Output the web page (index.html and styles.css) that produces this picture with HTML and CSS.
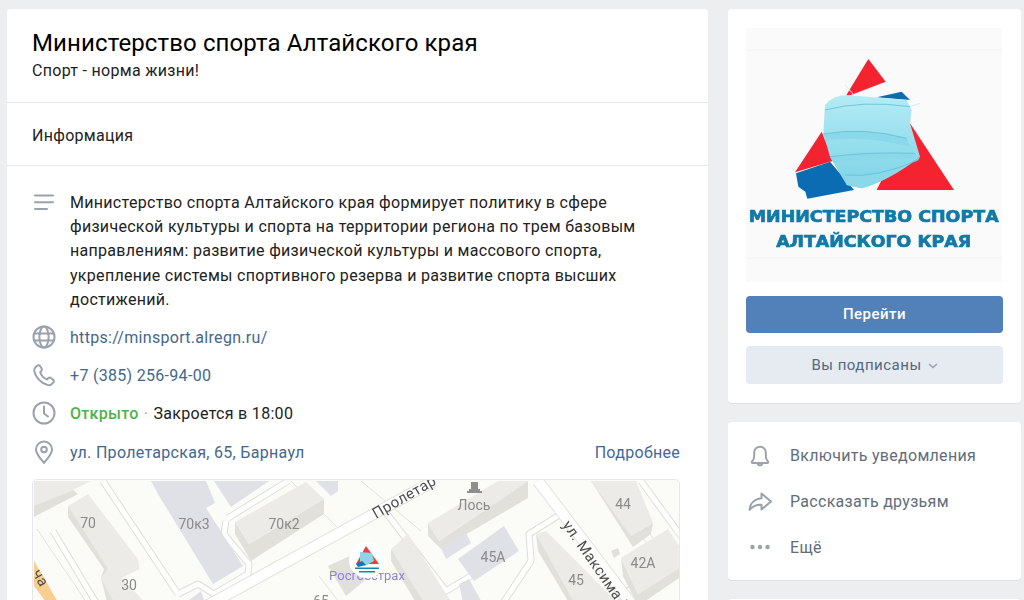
FILE: index.html
```html
<!DOCTYPE html>
<html lang="ru">

<head>
    <meta charset="UTF-8">
    <title>Министерство спорта Алтайского края</title>
    <link rel="stylesheet" href="styles.css">
</head>

<body>
    <div class="page">
        <main class="card main">
            <header class="head">
                <h1>Министерство спорта Алтайского края</h1>
                <p>Спорт - норма жизни!</p>
            </header>
            <div class="tab">Информация</div>
            <div class="info">
                <div class="row row-top">
                    <svg class="ico" viewBox="0 0 24 24"><path d="M3 3.500h18M3 10.200h18M3 16.900h12" /></svg>
                    <p class="desc">Министерство спорта Алтайского края формирует политику в сфере физической культуры и спорта на территории региона по трем базовым направлениям: развитие физической культуры и массового спорта, укрепление системы спортивного резерва и развитие спорта высших достижений.</p>
                </div>
                <div class="row">
                    <svg class="ico" viewBox="0 0 24 24"><circle cx="12" cy="12" r="10.500" /><ellipse cx="12" cy="12" rx="4.600" ry="10.500" /><path d="M2 8.500h20M2 15.500h20" /></svg>
                    <a class="link" href="#">https://minsport.alregn.ru/</a>
                </div>
                <div class="row">
                    <svg class="ico" viewBox="0 0 24 24"><path d="M3.200 4.600 5.400 2.600c.8-.7 1.900-.6 2.500.3l1.700 2.600c.5.8.4 1.700-.2 2.400L8.200 9.200c.9 2.800 3.700 5.900 6.800 7.200l1.500-1.300c.7-.6 1.700-.6 2.400-.1l2.300 1.800c.8.700.9 1.900.1 2.600l-1.900 2c-1 .8-2.600 1-4 .5C8.700 19.700 3.800 14.200 2.300 8.200c-.3-1.400.1-2.700.9-3.600z" /></svg>
                    <span class="link">+7 (385) 256-94-00</span>
                </div>
                <div class="row">
                    <svg class="ico" viewBox="0 0 24 24"><circle cx="12" cy="12" r="10.500" /><path d="M12 5.500V12.500L16 15.500" /></svg>
                    <span><b class="open">Открыто</b> <i class="dot">·</i> Закроется в 18:00</span>
                </div>
                <div class="row row-addr">
                    <svg class="ico" viewBox="0 0 24 24"><path d="M12 23C8 18 4 14 4 9.500a8 8 0 0 1 16 0C20 14 16 18 12 23z" /><circle cx="12" cy="9.500" r="2.800" /></svg>
                    <span class="link addr">ул. Пролетарская, 65, Барнаул</span>
                    <a class="more" href="#">Подробнее</a>
                </div>
            </div>
            <div class="map">
                <svg class="map-svg" viewBox="32 479 648 140">
                    <rect x="32" y="479" width="648" height="140" fill="#fbfbf7" />
                    <!-- roads -->
                    <path class="thin" d="M36 528 88 605M360 480 420 530M318 575 345 610M290 480 345 535M610 480 680 575M600 480 670 575" />
                    <g class="road-edge">
                        <path d="M102 480 177 593M52 530 97 605M227 517 287 480M225 520 223 533 248 563 247 573 213 593 197 583 177 593M560 513 528 533 530 560 500 605M640 480 680 535M600 605 680 560M380 505 445 590 470 575" />
                    </g>
                    <g class="road">
                        <path d="M102 480 177 593M52 530 97 605M227 517 287 480M225 520 223 533 248 563 247 573 213 593 197 583 177 593M560 513 528 533 530 560 500 605M640 480 680 535M600 605 680 560M380 505 445 590 470 575" />
                    </g>
                    <path class="road-edge-big" d="M187 615 433 480M537 480 632 605" />
                    <path class="road-big" d="M187 615 433 480M537 480 632 605" />
                    <polygon fill="#f9cf8f" points="33,560 45,580 59,605 48,605 33,585" />
                    <!-- buildings -->
                    <polygon class="wall" points="33,503 70,487 77,493 33,516" />
                    <polygon class="roof" points="33,480 90,480 70,490 33,505" />
                    <polygon class="wall" points="67,505 67,516 103,568 100,577 107,605 147,605 120,577 138,568 137,558" />
                    <polygon class="roof" points="67,505 87,493 137,558 138,568 120,577 147,605 115,605 100,577 107,568" />
                    <polygon class="gray" points="150,480 205,480 214,502 205,507 242,565 212,583 157,493" />
                    <polygon class="gray" points="213,480 268,480 230,506" />
                    <polygon class="gray" points="315,480 337,480 337,490 330,495" />
                    <polygon class="gray" points="187,600 200,590 205,605 190,605" />
                    <polygon class="wall" points="234,521 248,543 323,498 323,513 250,560 234,533" />
                    <polygon class="roof" points="234,521 305,481 323,498 248,543" />
                    <polygon class="wall" points="327,565 353,553 375,570 345,595" />
                    <polygon class="wall" points="390,548 390,560 417,605 440,605" />
                    <polygon class="roof" points="390,548 407,533 453,605 425,605" />
                    <polygon class="wall" points="427,522 438,540 527,480 527,497 440,548 427,535" />
                    <polygon class="roof" points="427,522 497,480 527,480 438,540" />
                    <polygon class="gray" points="440,547 465,532 470,542 445,558" />
                    <polygon class="gray" points="457,558 503,525 518,550 473,580" />
                    <polygon class="gray" points="458,583 468,578 483,605 463,605" />
                    <polygon class="wall" points="535,533 537,550 570,605 585,605" />
                    <polygon class="roof" points="535,533 545,530 620,605 575,605" />
                    <polygon class="wall" points="590,480 600,480 632,535 632,546" />
                    <polygon class="wall" points="630,535 652,522 650,533 632,546" />
                    <polygon class="roof" points="590,480 635,480 652,522 630,535" />
                    <polygon class="wall" points="610,550 617,547 619,553 613,557" />
                    <polygon class="wall" points="620,557 637,593 678,567 678,577 637,605 622,575" />
                    <polygon class="roof" points="620,557 667,528 678,545 678,567 637,593" />
                    <!-- labels -->
                    <text class="lb" x="87" y="527">70</text>
                    <text class="lb" x="193" y="528">70к3</text>
                    <text class="lb" x="283" y="528">70к2</text>
                    <text class="lb" x="128" y="589">30</text>
                    <text class="lb" x="320" y="605">65</text>
                    <text class="lb" x="473" y="509">Лось</text>
                    <text class="lb" x="492" y="561">45А</text>
                    <text class="lb" x="575" y="584">45</text>
                    <text class="lb" x="622" y="508">44</text>
                    <text class="lb" x="642" y="567">42А</text>
                    <path fill="#8e8e8e" d="M470 481h7v7h-7zM468 488h11v2h-11zM466 490h15v2h-15z" />
                    <text class="street" transform="translate(375 518) rotate(-30)">Пролетар</text>
                    <text class="street" transform="translate(561 524) rotate(55)">ул. Максима Г</text>
                    <text class="street" transform="translate(31 572) rotate(60)">ча</text>
                    <text class="poi" x="366" y="579">Росгосстрах</text>
                    <!-- marker -->
                    <circle cx="366" cy="559" r="18" fill="#fff" />
                    <polygon fill="#e8403f" points="365,545 378,563 355,563" />
                    <polygon fill="#8fd3e6" points="359,551 371,552 373,560 364,565 359,561" />
                    <polygon fill="#1a73b5" points="355,563 361,560 365,564 357,566" />
                    <rect x="354" y="566.500" width="24" height="1.500" fill="#1b82ad" />
                    <rect x="358" y="570" width="16" height="1.500" fill="#1b82ad" />
                </svg>
            </div>
        </main>
        <aside class="side">
            <section class="card owner">
                <svg class="logo" viewBox="48 54 768 762">
                    <defs>
                        <linearGradient id="mask" x1="0" y1="0" x2="0" y2="1">
                            <stop offset="0" stop-color="#b4ebf5" />
                            <stop offset="1" stop-color="#7dd3e6" />
                        </linearGradient>
                    </defs>
                    <rect x="48" y="54" width="768" height="762" fill="#fafafa" />
                    <path d="M48 120H816M48 744H816" stroke="#f1f1f1" stroke-width="2" />
                    <polygon fill="#f5232f" points="415,147 467,215 345,262" />
                    <polygon fill="#f5232f" points="540,340 672,540 440,540" />
                    <polygon fill="#f5232f" points="275,365 195,487 310,452" />
                    <polygon fill="#0b6cb3" points="198,490 300,455 372,540 232,566 226,545 205,530" />
                    <polygon fill="#0b6cb3" points="440,262 515,245 540,270" />
                    <path fill="url(#mask)" d="M285 285Q310 255 350 255L530 270 545 300 540 340 570 440Q480 510 395 535L350 525 300 440 280 370Z" />
                    <path fill="#8ad8e9" d="M280 372Q400 350 530 385L540 410Q400 375 285 392zM300 440Q420 425 555 430L560 445Q430 445 310 458zM345 495Q440 505 565 450L570 440Q480 510 395 535L350 525z" />
                    <path fill="none" stroke="#62c0d6" stroke-width="2.500" d="M285 300Q400 270 540 290M280 372Q400 350 530 385M300 440Q420 425 555 430M345 495Q440 505 565 450" />
                    <path fill="none" stroke="#cfeff5" stroke-width="3" d="M345 225 372 255M540 290 570 280" />
                    <text class="logo-t" x="431" y="636" textLength="750" lengthAdjust="spacingAndGlyphs">МИНИСТЕРСТВО СПОРТА</text>
                    <text class="logo-t" x="431" y="712" textLength="585" lengthAdjust="spacingAndGlyphs">АЛТАЙСКОГО КРАЯ</text>
                </svg>
                <a class="btn btn-main" href="#">Перейти</a>
                <a class="btn btn-sec" href="#">Вы подписаны
                    <svg class="chev" viewBox="0 0 10 6"><path d="M1 1 5 4.500 9 1" /></svg>
                </a>
            </section>
            <section class="card actions">
                <div class="action">
                    <svg class="ico" viewBox="0 0 24 24"><path d="M4 18.500c1.500-1.500 2.200-3 2.200-5.500V9.500a5.800 5.800 0 0 1 11.600 0V13c0 2.500.7 4 2.200 5.500.5.600.1 1.500-.7 1.500H4.700c-.8 0-1.200-.9-.7-1.500zM9.500 20.500a2.600 2.600 0 0 0 5 0" /></svg>
                    <span>Включить уведомления</span>
                </div>
                <div class="action">
                    <svg class="ico" viewBox="0 0 24 24"><path d="M13.500 4.500 23 12.500l-9.500 8v-4.800C8.500 15.500 4.500 17 1.500 21c.5-6.500 5-11 12-11.800z" /></svg>
                    <span>Рассказать друзьям</span>
                </div>
                <div class="action">
                    <svg class="ico dots" viewBox="0 0 24 24"><circle cx="4.500" cy="12" r="2.200" /><circle cx="12" cy="12" r="2.200" /><circle cx="19.500" cy="12" r="2.200" /></svg>
                    <span>Ещё</span>
                </div>
            </section>
            <section class="card stub"></section>
        </aside>
    </div>
</body>

</html>
```

FILE: styles.css
```css
* {
    margin: 0;
    padding: 0;
    box-sizing: border-box;
}

body {
    width: 1024px;
    height: 600px;
    overflow: hidden;
    background: #edeef0;
    font-family: Roboto, "Noto Sans", sans-serif;
    font-size: 16px;
    letter-spacing: .3px;
    color: #222;
}

a {
    text-decoration: none;
}

.page {
    display: flex;
    align-items: flex-start;
    gap: 20px;
    padding: 9px 3px 0 7px;
}

.card {
    background: #fff;
    border-radius: 4px;
    box-shadow: 0 1px 0 0 #dfe0e4;
}

.main {
    width: 701px;
    height: 700px;
    flex: none;
}

.side {
    width: 293px;
    flex: none;
}

.head {
    height: 94px;
    padding: 18px 25px 0;
    border-bottom: 1px solid #e7e8ec;
}

.head h1 {
    font-size: 24px;
    font-weight: 400;
    letter-spacing: .12px;
    line-height: 32px;
    color: #000;
}

.head p {
    line-height: 23px;
    color: #222;
}

.tab {
    height: 63px;
    padding-left: 25px;
    line-height: 65px;
    border-bottom: 1px solid #e7e8ec;
}

.info {
    padding: 25px 28px 0 25px;
}

.row {
    display: flex;
    align-items: center;
    gap: 14px;
    height: 38px;
}

.row-top {
    align-items: flex-start;
    height: auto;
    margin-bottom: 6px;
}

.row-addr {
    margin-top: 1px;
}

.desc {
    line-height: 24.200px;
    width: 590px;
}

.ico {
    width: 24px;
    height: 24px;
    flex: none;
    fill: none;
    stroke: #99a2ad;
    stroke-width: 2;
    stroke-linecap: round;
    stroke-linejoin: round;
}

.row-top .ico {
    margin-top: 1px;
}

.link {
    color: #44678d;
}

.open {
    font-weight: 500;
    color: #4bb34b;
}

.dot {
    margin: 0 1px;
    font-style: normal;
    color: #99a2ad;
}

.addr {
    flex: 1;
}

.more {
    color: #3f6a96;
}

.map {
    height: 140px;
    margin: 8px 28px 0 25px;
    border: 1px solid #e7e8ec;
    border-radius: 5px 5px 0 0;
    overflow: hidden;
}

.map-svg {
    display: block;
    width: 648px;
    height: 140px;
    filter: blur(.35px);
}

.thin {
    fill: none;
    stroke: #e3e3de;
    stroke-width: 1;
}

.road-edge {
    fill: none;
    stroke: #dfdfda;
    stroke-width: 7;
    stroke-linejoin: round;
}

.road {
    fill: none;
    stroke: #fff;
    stroke-width: 5;
    stroke-linejoin: round;
}

.road-edge-big {
    fill: none;
    stroke: #e3e3de;
    stroke-width: 12;
}

.road-big {
    fill: none;
    stroke: #fff;
    stroke-width: 10;
}

.roof {
    fill: #ecebe7;
}

.wall {
    fill: #e2e0da;
}

.gray {
    fill: #e0e0e7;
}

.lb {
    font-size: 14px;
    letter-spacing: 0;
    fill: #8a8a8a;
    text-anchor: middle;
}

.street {
    font-size: 15px;
    fill: #4d4d4d;
    letter-spacing: .4px;
}

.poi {
    font-size: 13px;
    letter-spacing: 0;
    fill: #8d80ea;
    text-anchor: middle;
}

.owner {
    height: 394px;
    padding: 19px 18px 0;
}

.logo {
    display: block;
    width: 256px;
    height: 254px;
    margin-bottom: 14px;
    filter: blur(.4px);
}

.logo-t {
    font-family: "DejaVu Sans", sans-serif;
    font-size: 46px;
    font-weight: 700;
    letter-spacing: 0;
    fill: #1279a8;
    stroke: #1279a8;
    stroke-width: 2;
    text-anchor: middle;
}

.btn {
    display: flex;
    align-items: center;
    justify-content: center;
    gap: 6px;
    border-radius: 4px;
    font-size: 15px;
    letter-spacing: .5px;
}

.btn-main {
    height: 37px;
    margin-bottom: 13px;
    padding-bottom: 2px;
    background: #5181b8;
    color: #fff;
    font-weight: 500;
}

.btn-sec {
    height: 38px;
    background: #e5ebf1;
    color: #55677d;
}

.chev {
    width: 10px;
    height: 6px;
    margin-top: 2px;
    fill: none;
    stroke: #99a2ad;
    stroke-width: 1.500;
}

.actions {
    margin-top: 19px;
    padding: 10px 0 10px 20px;
}

.action {
    display: flex;
    align-items: center;
    gap: 18px;
    height: 46px;
    color: #626d7a;
}

.dots {
    fill: #99a2ad;
    stroke: none;
}

.stub {
    height: 60px;
    margin-top: 19px;
}
```
